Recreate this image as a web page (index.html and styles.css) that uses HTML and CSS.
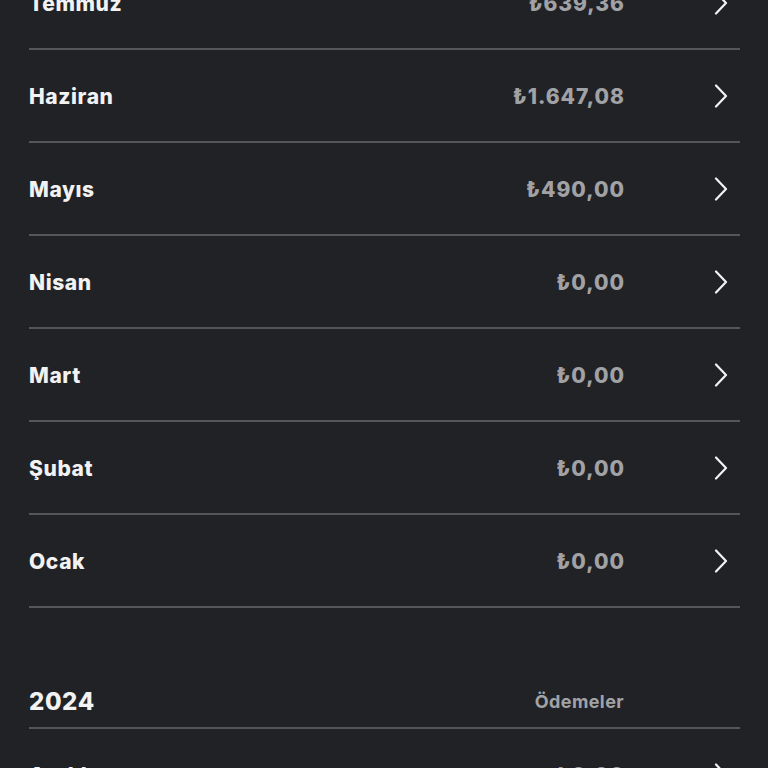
FILE: index.html
```html
<!DOCTYPE html>
<html lang="tr">
<head>
<meta charset="utf-8">
<link rel="stylesheet" href="styles.css">
</head>
<body>
<div class="page">
  <div class="list first">
    <div class="row"><span class="month">Temmuz</span><span class="amount">₺639,36</span><span class="chev"><svg width="16" height="24" viewBox="0 0 16 24"><path d="M3 1.5 L13 12 L3 22.5" fill="none" stroke="#f2f2f2" stroke-width="2.2" stroke-linecap="round" stroke-linejoin="round"/></svg></span></div>
    <div class="row"><span class="month">Haziran</span><span class="amount">₺1.647,08</span><span class="chev"><svg width="16" height="24" viewBox="0 0 16 24"><path d="M3 1.5 L13 12 L3 22.5" fill="none" stroke="#f2f2f2" stroke-width="2.2" stroke-linecap="round" stroke-linejoin="round"/></svg></span></div>
    <div class="row"><span class="month">Mayıs</span><span class="amount">₺490,00</span><span class="chev"><svg width="16" height="24" viewBox="0 0 16 24"><path d="M3 1.5 L13 12 L3 22.5" fill="none" stroke="#f2f2f2" stroke-width="2.2" stroke-linecap="round" stroke-linejoin="round"/></svg></span></div>
    <div class="row"><span class="month">Nisan</span><span class="amount">₺0,00</span><span class="chev"><svg width="16" height="24" viewBox="0 0 16 24"><path d="M3 1.5 L13 12 L3 22.5" fill="none" stroke="#f2f2f2" stroke-width="2.2" stroke-linecap="round" stroke-linejoin="round"/></svg></span></div>
    <div class="row"><span class="month">Mart</span><span class="amount">₺0,00</span><span class="chev"><svg width="16" height="24" viewBox="0 0 16 24"><path d="M3 1.5 L13 12 L3 22.5" fill="none" stroke="#f2f2f2" stroke-width="2.2" stroke-linecap="round" stroke-linejoin="round"/></svg></span></div>
    <div class="row"><span class="month">Şubat</span><span class="amount">₺0,00</span><span class="chev"><svg width="16" height="24" viewBox="0 0 16 24"><path d="M3 1.5 L13 12 L3 22.5" fill="none" stroke="#f2f2f2" stroke-width="2.2" stroke-linecap="round" stroke-linejoin="round"/></svg></span></div>
    <div class="row"><span class="month">Ocak</span><span class="amount">₺0,00</span><span class="chev"><svg width="16" height="24" viewBox="0 0 16 24"><path d="M3 1.5 L13 12 L3 22.5" fill="none" stroke="#f2f2f2" stroke-width="2.2" stroke-linecap="round" stroke-linejoin="round"/></svg></span></div>
  </div>
  <div class="section-head">
    <span class="year">2024</span>
    <span class="col-label">Ödemeler</span>
  </div>
  <div class="list">
    <div class="row"><span class="month">Aralık</span><span class="amount">₺0,00</span><span class="chev"><svg width="16" height="24" viewBox="0 0 16 24"><path d="M3 1.5 L13 12 L3 22.5" fill="none" stroke="#f2f2f2" stroke-width="2.2" stroke-linecap="round" stroke-linejoin="round"/></svg></span></div>
  </div>
</div>
</body>
</html>
```
FILE: styles.css
```css
html, body {
  margin: 0;
  padding: 0;
  background: #212226;
  overflow: hidden;
}
body {
  font-family: Inter, "Noto Sans", "DejaVu Sans", sans-serif;
  color: #f2f2f2;
}
.page {
  padding-left: 29px;
  width: 711px;
}
.list.first {
  margin-top: -43px;
}
.row {
  display: flex;
  align-items: center;
  height: 91px;
  border-bottom: 2px solid #54565a;
}
.month,
.amount {
  padding-top: 2px;
}
.month {
  flex: 1;
  font-size: 21px;
  font-weight: 800;
  letter-spacing: 0.6px;
  color: #f2f2f2;
}
.amount {
  font-size: 21px;
  font-weight: 800;
  letter-spacing: 1px;
  margin-right: -1px;
  color: #a1a2a6;
}
.chev {
  width: 116px;
  display: flex;
  justify-content: flex-end;
  padding-right: 11px;
  box-sizing: border-box;
}
.chev svg {
  display: block;
}
.section-head {
  display: flex;
  align-items: center;
  box-sizing: border-box;
  padding-top: 80px;
  padding-bottom: 12px;
  border-bottom: 2px solid #54565a;
  height: 121px;
}
.year {
  flex: 1;
  font-size: 24px;
  font-weight: 800;
  letter-spacing: 0.6px;
  color: #f2f2f2;
}
.col-label {
  font-size: 18px;
  font-weight: 700;
  letter-spacing: 0.4px;
  color: #a1a2a6;
  margin-right: 116px;
}
```
